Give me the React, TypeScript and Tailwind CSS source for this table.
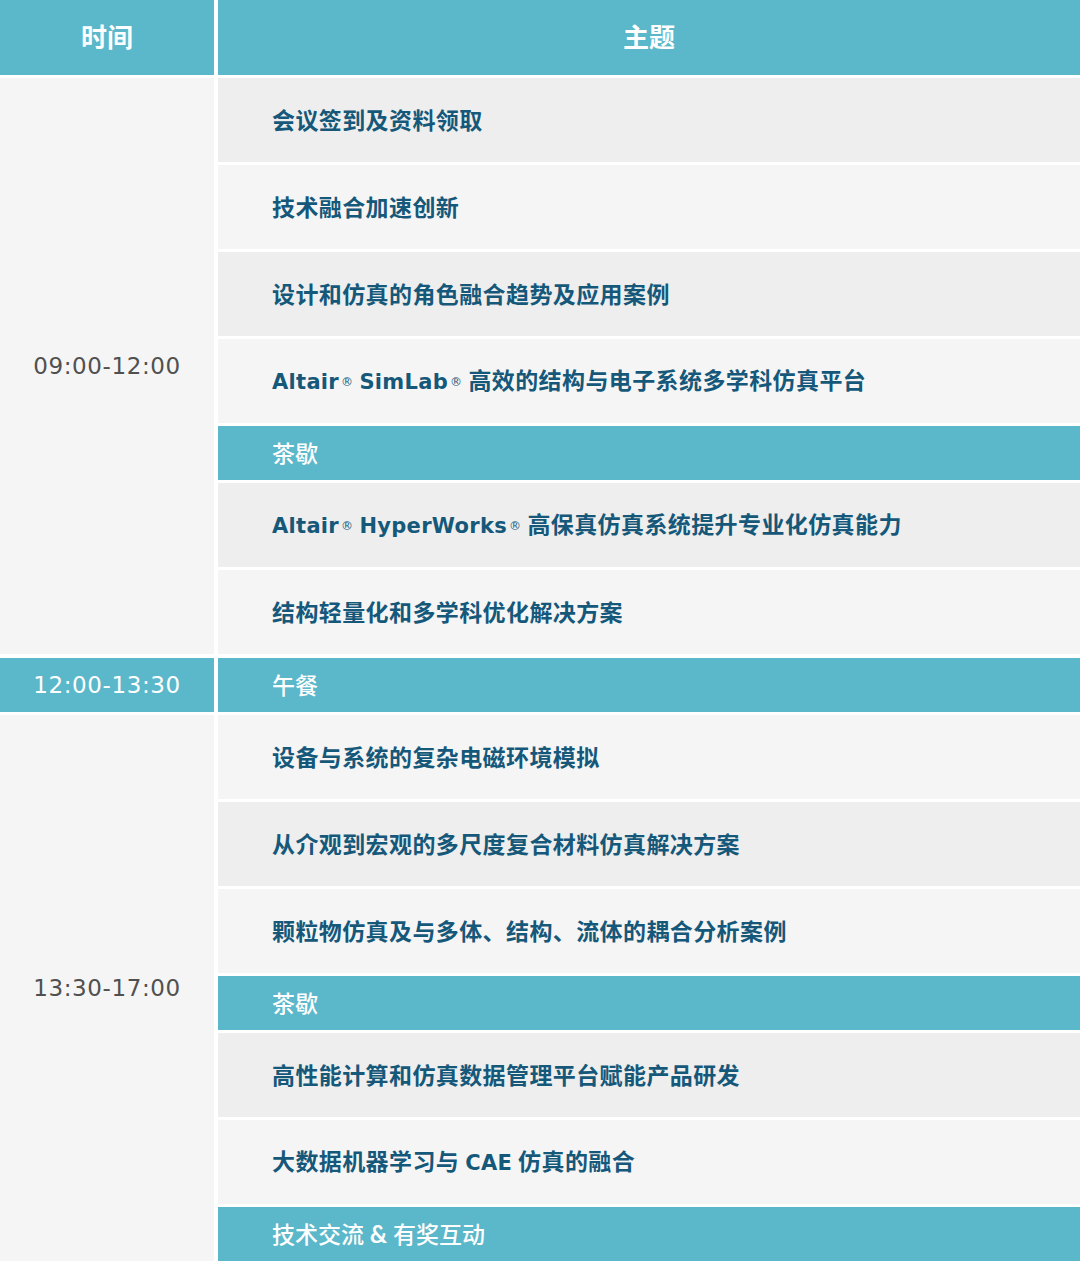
import React from "react";

type Row = { kind: "topic" | "break"; text: React.ReactNode };

const R = () => (
  <sup className="text-[12px] relative -top-[3px] ml-[2px] font-normal" style={{ fontFamily: '"DejaVu Sans", sans-serif' }}>
    ®
  </sup>
);

const L = ({ children }: { children: React.ReactNode }) => (
  <span className="text-[21px] tracking-[0.3px]" style={{ fontFamily: '"DejaVu Sans", sans-serif' }}>
    {children}
  </span>
);

const morning: Row[] = [
  { kind: "topic", text: "会议签到及资料领取" },
  { kind: "topic", text: "技术融合加速创新" },
  { kind: "topic", text: "设计和仿真的角色融合趋势及应用案例" },
  {
    kind: "topic",
    text: (
      <>
        <L>Altair</L><R /> <L>SimLab</L><R /> 高效的结构与电子系统多学科仿真平台
      </>
    ),
  },
  { kind: "break", text: "茶歇" },
  {
    kind: "topic",
    text: (
      <>
        <L>Altair</L><R /> <L>HyperWorks</L><R /> 高保真仿真系统提升专业化仿真能力
      </>
    ),
  },
  { kind: "topic", text: "结构轻量化和多学科优化解决方案" },
];

const afternoon: Row[] = [
  { kind: "topic", text: "设备与系统的复杂电磁环境模拟" },
  { kind: "topic", text: "从介观到宏观的多尺度复合材料仿真解决方案" },
  { kind: "topic", text: "颗粒物仿真及与多体、结构、流体的耦合分析案例" },
  { kind: "break", text: "茶歇" },
  { kind: "topic", text: "高性能计算和仿真数据管理平台赋能产品研发" },
  { kind: "topic", text: <>大数据机器学习与 <L>CAE</L> 仿真的融合</> },
  { kind: "break", text: <>技术交流 <span className="font-bold text-[24px]">&amp;</span> 有奖互动</> },
];

const font = { fontFamily: '"Lato", "Noto Sans CJK SC", sans-serif' };
const timeFont = { fontFamily: '"DejaVu Sans", sans-serif' };

function Rows({ rows, startDark }: { rows: Row[]; startDark: boolean }) {
  let i = startDark ? 0 : 1;
  return (
    <div className="flex flex-col gap-[3px] flex-1">
      {rows.map((r, idx) => {
        if (r.kind === "break") {
          return (
            <div key={idx} className="h-[54px] bg-[#5bb7ca] flex items-center pl-[54px] text-white text-[23px] font-medium">
              <span>{r.text}</span>
            </div>
          );
        }
        const dark = i % 2 === 0;
        i++;
        return (
          <div
            key={idx}
            className={`h-[84px] flex items-center pl-[54px] text-[#15587a] text-[23px] tracking-[0.4px] font-bold ${dark ? "bg-[#eeeeee]" : "bg-[#f5f5f5]"}`}
          >
            <span>{r.text}</span>
          </div>
        );
      })}
    </div>
  );
}

export default function App() {
  return (
    <div className="w-[1080px] bg-white flex flex-col" style={font}>
      <div className="flex gap-[4px] h-[75px]">
        <div className="w-[214px] bg-[#5bb7ca] flex items-center justify-center text-white text-[26px] font-bold">时间</div>
        <div className="flex-1 bg-[#5bb7ca] flex items-center justify-center text-white text-[26px] font-bold">主题</div>
      </div>

      <div className="flex gap-[4px] mt-[3px]">
        <div className="w-[214px] bg-[#f5f5f5] flex items-center justify-center text-[#505050] text-[23px] tracking-[0.6px]" style={timeFont}>
          09:00-12:00
        </div>
        <Rows rows={morning} startDark={true} />
      </div>

      <div className="flex gap-[4px] mt-[4px] h-[54px]">
        <div className="w-[214px] bg-[#5bb7ca] flex items-center justify-center text-white text-[23px] tracking-[0.6px]" style={timeFont}>
          12:00-13:30
        </div>
        <div className="flex-1 bg-[#5bb7ca] flex items-center pl-[54px] text-white text-[23px] font-medium">午餐</div>
      </div>

      <div className="flex gap-[4px] mt-[3px]">
        <div className="w-[214px] bg-[#f5f5f5] flex items-center justify-center text-[#505050] text-[23px] tracking-[0.6px]" style={timeFont}>
          13:30-17:00
        </div>
        <Rows rows={afternoon} startDark={false} />
      </div>
    </div>
  );
}
